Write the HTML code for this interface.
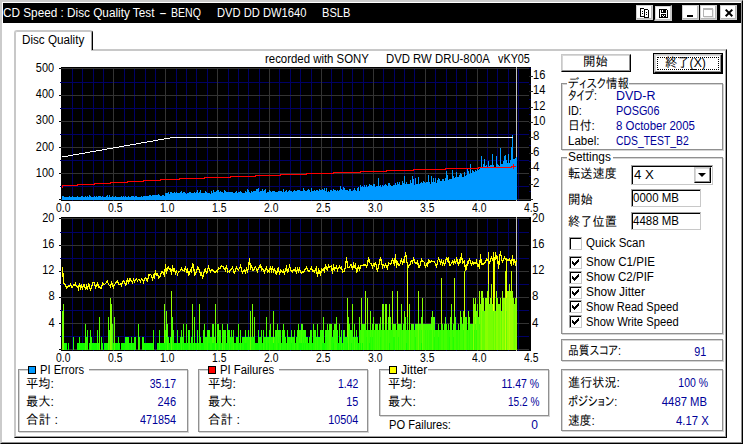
<!DOCTYPE html>
<html><head><meta charset="utf-8"><title>CD Speed : Disc Quality Test</title>
<style>
html,body{margin:0;padding:0}
body{width:743px;height:444px;position:relative;overflow:hidden;background:#fff;font:12px "Liberation Sans","IPAPGothic","IPAGothic",sans-serif;color:#000}
.a{position:absolute;box-sizing:border-box}
.t{position:absolute;white-space:pre;line-height:16px;height:16px}
.ch{position:absolute;left:0;top:0}
.g{position:absolute;box-sizing:border-box;border:1px solid #909090}
.gl{position:absolute;background:#fff;height:4px}
.btn{position:absolute;box-sizing:border-box;background:#fff;border:1px solid;border-color:#c8c8c8 #000 #000 #c8c8c8;box-shadow:inset -1px -1px 0 #909090,inset 1px 1px 0 #d8d8d8}
.ed{position:absolute;box-sizing:border-box;background:#fff;border:1px solid;border-color:#a0a0a0 #c8c8c8 #c8c8c8 #a0a0a0;box-shadow:inset 1px 1px 0 #000}
.cb{position:absolute;box-sizing:border-box;width:13px;height:13px;background:#fff;border:1px solid;border-color:#a0a0a0 #c8c8c8 #c8c8c8 #a0a0a0;box-shadow:inset 1px 1px 0 #000}
.sq{position:absolute;box-sizing:border-box;width:8px;height:8px;border:1px solid #000}
.tb{position:absolute;box-sizing:border-box;top:5px;width:17px;height:15px;background:#fff;border:1px solid #d0d0d0;box-shadow:inset -1px -1px 0 #b8b8b8}
</style></head>
<body>
<!-- window frame -->
<div class="a" style="left:0;top:0;width:743px;height:444px;border:1px solid;border-color:#cbcbcb #000 #000 #cbcbcb"></div>
<div class="a" style="left:1px;top:1px;width:741px;height:442px;border:1px solid;border-color:#cbcbcb #909090 #909090 #cbcbcb"></div>
<div class="a" style="left:3px;top:3px;width:738px;height:20px;background:#000"></div>
<!-- title buttons -->
<div class="tb" style="left:636px"><svg width="17" height="15" viewBox="0 0 17 15" style="position:absolute;left:-1px;top:-1px" shape-rendering="crispEdges"><path d="M4.5,3.5h3l1,1v7h-4z" fill="#fff" stroke="#000"/><path d="M8.5,4.5h3l1,1v7h-4z" fill="#fff" stroke="#000"/><path d="M6,6h1v1h-1zM6,8h1v1h-1zM10,7h1v1h-1zM10,9h1v1h-1z" fill="#000"/></svg></div>
<div class="a" style="left:654px;top:5px;width:18px;height:16px;background:#fff;border:2px solid;border-color:#000 #c8c8c8 #c8c8c8 #000;border-top-width:1px;border-left-width:1px;box-shadow:inset 1px 1px 0 #d8d8d8"><svg width="18" height="16" viewBox="0 0 18 16" style="position:absolute;left:-1px;top:-1px" shape-rendering="crispEdges"><path d="M5,4h8v1h1v8h-9z" fill="#000"/><path d="M6,5h1v7h-1zM12,5h1v7h-1zM7,8h5v1h-5zM8,5h1v2h-1zM8,10h1v1h-1zM9,11h1v1h-1zM10,10h1v1h-1z" fill="#fff"/></svg></div>
<div class="tb" style="left:682px"><div class="a" style="left:4px;top:9px;width:6px;height:2px;background:#000"></div></div>
<div class="tb" style="left:700px"><div class="a" style="left:2px;top:2px;width:10px;height:9px;border:1px solid #b4b4b4;border-top-width:2px;box-shadow:1px 1px 0 #e8e8e8"></div></div>
<div class="tb" style="left:720px"><svg width="17" height="15" viewBox="0 0 17 15" style="position:absolute;left:-1px;top:-1px"><path d="M5.7,4.6l6.6,6.6M12.3,4.6l-6.6,6.6" stroke="#000" stroke-width="2"/></svg></div>
<!-- tab panel -->
<div class="a" style="left:14px;top:49px;width:713px;height:389px;border:1px solid;border-color:#c8c8c8 #000 #000 #c8c8c8"></div>
<div class="a" style="left:15px;top:50px;width:711px;height:387px;border:1px solid;border-color:#c8c8c8 #a0a0a0 #a0a0a0 #c8c8c8"></div>
<div class="a" style="left:14px;top:30px;width:79px;height:20px;background:#fff;border:1px solid;border-color:#c8c8c8 #000 transparent #c8c8c8;border-bottom:0;border-radius:3px 3px 0 0"></div>
<div class="a" style="left:15px;top:31px;width:77px;height:19px;background:#fff;border:1px solid;border-color:#c8c8c8 #a0a0a0 #fff #c8c8c8;border-bottom:0;border-radius:2px 2px 0 0"></div>
<div class="a" style="left:16px;top:48px;width:75px;height:4px;background:#fff"></div>
<svg class="ch" width="743" height="444" viewBox="0 0 743 444" shape-rendering="crispEdges" fill="none">
<rect x="61" y="67" width="470" height="134" fill="#000"/>
<path d="M72.5,68 V201" stroke="#000066"/>
<path d="M82.5,68 V201" stroke="#000066"/>
<path d="M93.5,68 V201" stroke="#000066"/>
<path d="M103.5,68 V201" stroke="#000066"/>
<path d="M124.5,68 V201" stroke="#000066"/>
<path d="M134.5,68 V201" stroke="#000066"/>
<path d="M145.5,68 V201" stroke="#000066"/>
<path d="M155.5,68 V201" stroke="#000066"/>
<path d="M176.5,68 V201" stroke="#000066"/>
<path d="M186.5,68 V201" stroke="#000066"/>
<path d="M196.5,68 V201" stroke="#000066"/>
<path d="M207.5,68 V201" stroke="#000066"/>
<path d="M228.5,68 V201" stroke="#000066"/>
<path d="M238.5,68 V201" stroke="#000066"/>
<path d="M248.5,68 V201" stroke="#000066"/>
<path d="M259.5,68 V201" stroke="#000066"/>
<path d="M279.5,68 V201" stroke="#000066"/>
<path d="M290.5,68 V201" stroke="#000066"/>
<path d="M300.5,68 V201" stroke="#000066"/>
<path d="M311.5,68 V201" stroke="#000066"/>
<path d="M331.5,68 V201" stroke="#000066"/>
<path d="M342.5,68 V201" stroke="#000066"/>
<path d="M352.5,68 V201" stroke="#000066"/>
<path d="M363.5,68 V201" stroke="#000066"/>
<path d="M383.5,68 V201" stroke="#000066"/>
<path d="M394.5,68 V201" stroke="#000066"/>
<path d="M404.5,68 V201" stroke="#000066"/>
<path d="M414.5,68 V201" stroke="#000066"/>
<path d="M435.5,68 V201" stroke="#000066"/>
<path d="M446.5,68 V201" stroke="#000066"/>
<path d="M456.5,68 V201" stroke="#000066"/>
<path d="M466.5,68 V201" stroke="#000066"/>
<path d="M487.5,68 V201" stroke="#000066"/>
<path d="M497.5,68 V201" stroke="#000066"/>
<path d="M508.5,68 V201" stroke="#000066"/>
<path d="M518.5,68 V201" stroke="#000066"/>
<path d="M60,82.5 H529" stroke="#000066"/>
<path d="M60,108.5 H529" stroke="#000066"/>
<path d="M60,134.5 H529" stroke="#000066"/>
<path d="M60,160.5 H529" stroke="#000066"/>
<path d="M60,186.5 H529" stroke="#000066"/>
<path d="M113.5,68 V201" stroke="#333"/>
<path d="M165.5,68 V201" stroke="#333"/>
<path d="M217.5,68 V201" stroke="#333"/>
<path d="M269.5,68 V201" stroke="#333"/>
<path d="M321.5,68 V201" stroke="#333"/>
<path d="M373.5,68 V201" stroke="#333"/>
<path d="M425.5,68 V201" stroke="#333"/>
<path d="M477.5,68 V201" stroke="#333"/>
<path d="M61,68.5 H529" stroke="#333"/>
<path d="M61,95.5 H529" stroke="#333"/>
<path d="M61,121.5 H529" stroke="#333"/>
<path d="M61,147.5 H529" stroke="#333"/>
<path d="M61,173.5 H529" stroke="#333"/>
<path d="M61,199.5 H529" stroke="#333"/>
<path d="M516.5,67 V201" stroke="#c0c0c0"/>
<path d="M62,200V196 H63V196 H64V197 H65V197 H66V197 H67V197 H68V197 H69V196 H70V197 H71V197 H72V196 H73V197 H74V197 H75V197 H76V197 H77V196 H78V197 H79V197 H80V197 H81V196 H82V196 H83V197 H84V197 H85V196 H86V197 H87V196 H88V197 H89V195 H90V196 H91V197 H92V197 H93V197 H94V196 H95V197 H96V196 H97V197 H98V196 H99V196 H100V196 H101V197 H102V196 H103V197 H104V197 H105V197 H106V196 H107V195 H108V197 H109V195 H110V197 H111V197 H112V196 H113V197 H114V197 H115V196 H116V197 H117V197 H118V197 H119V197 H120V197 H121V196 H122V197 H123V196 H124V197 H125V196 H126V197 H127V197 H128V196 H129V197 H130V197 H131V196 H132V196 H133V196 H134V197 H135V196 H136V196 H137V197 H138V197 H139V197 H140V197 H141V196 H142V197 H143V196 H144V196 H145V196 H146V196 H147V196 H148V196 H149V195 H150V195 H151V196 H152V195 H153V195 H154V195 H155V195 H156V195 H157V195 H158V194 H159V195 H160V196 H161V196 H162V195 H163V195 H164V196 H165V193 H166V193 H167V193 H168V192 H169V194 H170V192 H171V192 H172V193 H173V193 H174V192 H175V193 H176V192 H177V193 H178V193 H179V193 H180V192 H181V191 H182V193 H183V192 H184V192 H185V193 H186V194 H187V193 H188V193 H189V192 H190V192 H191V193 H192V193 H193V193 H194V192 H195V193 H196V192 H197V190 H198V193 H199V192 H200V190 H201V193 H202V193 H203V193 H204V193 H205V191 H206V192 H207V193 H208V193 H209V193 H210V194 H211V191 H212V193 H213V190 H214V192 H215V192 H216V191 H217V190 H218V190 H219V192 H220V191 H221V192 H222V192 H223V193 H224V190 H225V191 H226V192 H227V192 H228V192 H229V192 H230V192 H231V192 H232V192 H233V193 H234V193 H235V192 H236V191 H237V193 H238V192 H239V192 H240V191 H241V192 H242V193 H243V193 H244V193 H245V191 H246V192 H247V189 H248V190 H249V192 H250V193 H251V191 H252V192 H253V191 H254V191 H255V191 H256V189 H257V189 H258V188 H259V192 H260V191 H261V191 H262V189 H263V191 H264V190 H265V189 H266V193 H267V192 H268V192 H269V190 H270V191 H271V192 H272V191 H273V191 H274V191 H275V192 H276V192 H277V192 H278V191 H279V191 H280V191 H281V191 H282V192 H283V189 H284V192 H285V191 H286V190 H287V192 H288V191 H289V190 H290V191 H291V191 H292V192 H293V191 H294V190 H295V191 H296V191 H297V190 H298V190 H299V190 H300V191 H301V191 H302V191 H303V188 H304V190 H305V191 H306V191 H307V190 H308V189 H309V190 H310V192 H311V188 H312V191 H313V191 H314V190 H315V191 H316V190 H317V190 H318V191 H319V189 H320V190 H321V190 H322V189 H323V190 H324V188 H325V191 H326V188 H327V192 H328V191 H329V192 H330V190 H331V190 H332V191 H333V189 H334V190 H335V190 H336V191 H337V190 H338V191 H339V190 H340V186 H341V189 H342V190 H343V187 H344V188 H345V190 H346V190 H347V190 H348V191 H349V189 H350V189 H351V191 H352V191 H353V190 H354V188 H355V190 H356V191 H357V188 H358V187 H359V191 H360V185 H361V187 H362V186 H363V187 H364V185 H365V187 H366V185 H367V187 H368V186 H369V184 H370V185 H371V185 H372V186 H373V184 H374V184 H375V187 H376V186 H377V186 H378V178 H379V186 H380V185 H381V187 H382V185 H383V186 H384V185 H385V184 H386V185 H387V186 H388V183 H389V183 H390V185 H391V186 H392V186 H393V185 H394V185 H395V183 H396V185 H397V182 H398V184 H399V182 H400V185 H401V185 H402V181 H403V183 H404V176 H405V184 H406V182 H407V184 H408V184 H409V184 H410V180 H411V183 H412V176 H413V179 H414V185 H415V178 H416V184 H417V184 H418V177 H419V184 H420V183 H421V182 H422V183 H423V181 H424V182 H425V183 H426V182 H427V182 H428V175 H429V182 H430V184 H431V176 H432V182 H433V178 H434V182 H435V178 H436V183 H437V180 H438V178 H439V179 H440V181 H441V181 H442V179 H443V179 H444V181 H445V178 H446V171 H447V175 H448V180 H449V179 H450V179 H451V179 H452V170 H453V176 H454V178 H455V177 H456V172 H457V177 H458V177 H459V175 H460V173 H461V174 H462V177 H463V177 H464V172 H465V176 H466V175 H467V169 H468V171 H469V174 H470V164 H471V173 H472V170 H473V171 H474V172 H475V170 H476V171 H477V169 H478V170 H479V169 H480V168 H481V156 H482V167 H483V164 H484V159 H485V166 H486V165 H487V167 H488V161 H489V166 H490V165 H491V165 H492V154 H493V165 H494V167 H495V167 H496V156 H497V164 H498V165 H499V166 H500V148 H501V164 H502V164 H503V161 H504V156 H505V155 H506V160 H507V163 H508V154 H509V163 H510V160 H511V147 H512V135 H513V159 H514V159 H515V158 H516V157 H517V200Z" fill="#0099ff"/>
<path d="M62,157 L172.5,137.5 H513" stroke="#fff"/>
<path d="M62.5,188 V185.5 H77.5 V184.5 H94.5 V183.5 H110.5 V182.5 H127.5 V181.5 H143.5 V180.5 H160.5 V179.5 H179.5 V178.5 H204.5 V177.5 H230.5 V176.5 H255.5 V175.5 H280.5 V174.5 H306.5 V173.5 H333.5 V172.5 H360.5 V171.5 H386.5 V170.5 H413.5 V169.5 H445.5 V168.5 H478.5 V167.5 H511.5 V166.5 H515" stroke="#f00"/>
<path d="M511,166.5 H516 M513.5,164 V169" stroke="#f00"/>
<path d="M59,68.5 H61" stroke="#000"/>
<path d="M59,95.5 H61" stroke="#000"/>
<path d="M59,121.5 H61" stroke="#000"/>
<path d="M59,147.5 H61" stroke="#000"/>
<path d="M59,173.5 H61" stroke="#000"/>
<path d="M59,199.5 H61" stroke="#000"/>
<path d="M529,199.5 H533" stroke="#2a2a2a"/>
<path d="M529,184.5 H533" stroke="#2a2a2a"/>
<path d="M529,168.5 H533" stroke="#2a2a2a"/>
<path d="M529,153.5 H533" stroke="#2a2a2a"/>
<path d="M529,137.5 H533" stroke="#2a2a2a"/>
<path d="M529,122.5 H533" stroke="#2a2a2a"/>
<path d="M529,107.5 H533" stroke="#2a2a2a"/>
<path d="M529,91.5 H533" stroke="#2a2a2a"/>
<path d="M529,76.5 H533" stroke="#2a2a2a"/>
<path d="M529,191.5 H531" stroke="#000066"/>
<path d="M529,176.5 H531" stroke="#000066"/>
<path d="M529,161.5 H531" stroke="#000066"/>
<path d="M529,145.5 H531" stroke="#000066"/>
<path d="M529,130.5 H531" stroke="#000066"/>
<path d="M529,114.5 H531" stroke="#000066"/>
<path d="M529,99.5 H531" stroke="#000066"/>
<path d="M529,84.5 H531" stroke="#000066"/>
<path d="M529,68.5 H531" stroke="#000066"/>
<rect x="61" y="217" width="470" height="134" fill="#000"/>
<path d="M72.5,218 V351" stroke="#000066"/>
<path d="M82.5,218 V351" stroke="#000066"/>
<path d="M93.5,218 V351" stroke="#000066"/>
<path d="M103.5,218 V351" stroke="#000066"/>
<path d="M124.5,218 V351" stroke="#000066"/>
<path d="M134.5,218 V351" stroke="#000066"/>
<path d="M145.5,218 V351" stroke="#000066"/>
<path d="M155.5,218 V351" stroke="#000066"/>
<path d="M176.5,218 V351" stroke="#000066"/>
<path d="M186.5,218 V351" stroke="#000066"/>
<path d="M196.5,218 V351" stroke="#000066"/>
<path d="M207.5,218 V351" stroke="#000066"/>
<path d="M228.5,218 V351" stroke="#000066"/>
<path d="M238.5,218 V351" stroke="#000066"/>
<path d="M248.5,218 V351" stroke="#000066"/>
<path d="M259.5,218 V351" stroke="#000066"/>
<path d="M279.5,218 V351" stroke="#000066"/>
<path d="M290.5,218 V351" stroke="#000066"/>
<path d="M300.5,218 V351" stroke="#000066"/>
<path d="M311.5,218 V351" stroke="#000066"/>
<path d="M331.5,218 V351" stroke="#000066"/>
<path d="M342.5,218 V351" stroke="#000066"/>
<path d="M352.5,218 V351" stroke="#000066"/>
<path d="M363.5,218 V351" stroke="#000066"/>
<path d="M383.5,218 V351" stroke="#000066"/>
<path d="M394.5,218 V351" stroke="#000066"/>
<path d="M404.5,218 V351" stroke="#000066"/>
<path d="M414.5,218 V351" stroke="#000066"/>
<path d="M435.5,218 V351" stroke="#000066"/>
<path d="M446.5,218 V351" stroke="#000066"/>
<path d="M456.5,218 V351" stroke="#000066"/>
<path d="M466.5,218 V351" stroke="#000066"/>
<path d="M487.5,218 V351" stroke="#000066"/>
<path d="M497.5,218 V351" stroke="#000066"/>
<path d="M508.5,218 V351" stroke="#000066"/>
<path d="M518.5,218 V351" stroke="#000066"/>
<path d="M60,232.5 H529" stroke="#000066"/>
<path d="M60,258.5 H529" stroke="#000066"/>
<path d="M60,284.5 H529" stroke="#000066"/>
<path d="M60,310.5 H529" stroke="#000066"/>
<path d="M60,336.5 H529" stroke="#000066"/>
<path d="M113.5,218 V351" stroke="#333"/>
<path d="M165.5,218 V351" stroke="#333"/>
<path d="M217.5,218 V351" stroke="#333"/>
<path d="M269.5,218 V351" stroke="#333"/>
<path d="M321.5,218 V351" stroke="#333"/>
<path d="M373.5,218 V351" stroke="#333"/>
<path d="M425.5,218 V351" stroke="#333"/>
<path d="M477.5,218 V351" stroke="#333"/>
<path d="M61,218.5 H529" stroke="#333"/>
<path d="M61,245.5 H529" stroke="#333"/>
<path d="M61,271.5 H529" stroke="#333"/>
<path d="M61,297.5 H529" stroke="#333"/>
<path d="M61,323.5 H529" stroke="#333"/>
<path d="M61,349.5 H529" stroke="#333"/>
<path d="M516.5,217 V351" stroke="#c0c0c0"/>
<path d="M64,350V343H67V350ZM68,350V343H69V350ZM77,350V343H79V350ZM80,350V343H85V350ZM89,350V343H90V350ZM92,350V343H97V350ZM98,350V343H99V350ZM102,350V343H103V350ZM104,350V343H108V350ZM113,350V343H114V350ZM115,350V343H118V350ZM119,350V343H120V350ZM121,350V343H125V350ZM129,350V343H131V350ZM132,350V343H134V350ZM144,350V343H153V350ZM157,350V343H159V350ZM160,350V343H165V350ZM166,350V343H167V350ZM169,350V343H171V350ZM174,350V343H177V350ZM178,350V343H181V350ZM182,350V343H183V350ZM184,350V343H188V350ZM190,350V343H192V350ZM193,350V343H194V350ZM195,350V343H197V350ZM198,350V343H199V350ZM201,350V343H204V350ZM208,350V343H210V350ZM212,350V343H215V350ZM216,350V343H218V350ZM220,350V343H222V350ZM225,350V343H227V350ZM228,350V343H229V350ZM230,350V343H231V350ZM234,350V343H236V350ZM238,350V343H240V350ZM241,350V343H242V350ZM244,350V343H247V350ZM255,350V343H259V350ZM262,350V343H263V350ZM265,350V343H266V350ZM268,350V343H269V350ZM273,350V343H274V350ZM278,350V343H279V350ZM281,350V343H282V350ZM286,350V343H287V350ZM291,350V343H292V350ZM295,350V343H296V350ZM299,350V343H302V350ZM303,350V343H304V350ZM305,350V343H306V350ZM308,350V343H309V350ZM312,350V343H313V350ZM322,350V343H325V350ZM333,350V343H334V350ZM337,350V343H339V350ZM340,350V343H341V350ZM342,350V343H343V350ZM347,350V343H348V350ZM351,350V343H352V350ZM358,350V343H359V350ZM360,350V343H361V350ZM362,350V343H363V350ZM369,350V343H370V350ZM389,350V343H390V350ZM406,350V343H407V350ZM421,350V343H422V350Z" fill="#11ff00"/>
<path d="M73,350V337H74V350ZM79,350V337H80V350ZM86,350V337H87V350ZM91,350V337H92V350ZM101,350V337H102V350ZM118,350V337H119V350ZM125,350V337H129V350ZM131,350V337H132V350ZM134,350V337H136V350ZM139,350V337H140V350ZM142,350V337H144V350ZM165,350V337H166V350ZM168,350V337H169V350ZM172,350V337H174V350ZM177,350V337H178V350ZM183,350V337H184V350ZM188,350V337H189V350ZM192,350V337H193V350ZM194,350V337H195V350ZM199,350V337H201V350ZM204,350V337H207V350ZM210,350V337H212V350ZM218,350V337H219V350ZM223,350V337H224V350ZM227,350V337H228V350ZM231,350V337H233V350ZM236,350V337H238V350ZM242,350V337H244V350ZM247,350V337H250V350ZM251,350V337H255V350ZM259,350V337H262V350ZM264,350V337H265V350ZM267,350V337H268V350ZM270,350V337H273V350ZM274,350V337H276V350ZM277,350V337H278V350ZM279,350V337H280V350ZM282,350V337H286V350ZM288,350V337H291V350ZM292,350V337H294V350ZM296,350V337H297V350ZM298,350V337H299V350ZM302,350V337H303V350ZM304,350V337H305V350ZM306,350V337H308V350ZM309,350V337H312V350ZM313,350V337H315V350ZM316,350V337H317V350ZM318,350V337H320V350ZM325,350V337H327V350ZM331,350V337H333V350ZM339,350V337H340V350ZM344,350V337H347V350ZM349,350V337H350V350ZM353,350V337H354V350ZM355,350V337H356V350ZM357,350V337H358V350ZM366,350V337H367V350ZM370,350V337H371V350ZM372,350V337H373V350ZM380,350V337H381V350ZM393,350V337H395V350ZM398,350V337H399V350ZM415,350V337H416V350ZM434,350V337H435V350ZM438,350V337H439V350ZM449,350V337H450V350ZM453,350V337H454V350ZM166,343V337H167V343ZM170,343V337H171V343ZM180,343V337H181V343ZM182,343V337H183V343ZM186,343V337H187V343ZM191,343V337H192V343ZM208,343V337H210V343ZM214,343V337H215V343ZM230,343V337H231V343ZM238,343V337H239V343ZM244,343V337H245V343ZM246,343V337H247V343ZM265,343V337H266V343ZM268,343V337H269V343ZM333,343V337H334V343ZM337,343V337H338V343ZM340,343V337H341V343ZM347,343V337H348V343Z" fill="#22ff00"/>
<path d="M87,350V330H88V350ZM90,350V330H91V350ZM97,350V330H98V350ZM109,350V330H110V350ZM153,350V330H154V350ZM159,350V330H160V350ZM181,350V330H182V350ZM189,350V330H190V350ZM197,350V330H198V350ZM207,350V330H208V350ZM219,350V330H220V350ZM224,350V330H225V350ZM229,350V330H230V350ZM233,350V330H234V350ZM240,350V330H241V350ZM263,350V330H264V350ZM266,350V330H267V350ZM269,350V330H270V350ZM276,350V330H277V350ZM280,350V330H281V350ZM287,350V330H288V350ZM294,350V330H295V350ZM297,350V330H298V350ZM315,350V330H316V350ZM317,350V330H318V350ZM320,350V330H322V350ZM327,350V330H329V350ZM334,350V330H337V350ZM341,350V330H342V350ZM343,350V330H344V350ZM350,350V330H351V350ZM352,350V330H353V350ZM356,350V330H357V350ZM359,350V330H360V350ZM364,350V330H366V350ZM368,350V330H369V350ZM371,350V330H372V350ZM373,350V330H375V350ZM376,350V330H377V350ZM378,350V330H379V350ZM381,350V330H382V350ZM384,350V330H386V350ZM387,350V330H388V350ZM390,350V330H393V350ZM396,350V330H397V350ZM400,350V330H401V350ZM402,350V330H403V350ZM407,350V330H409V350ZM410,350V330H411V350ZM414,350V330H415V350ZM419,350V330H420V350ZM425,350V330H426V350ZM427,350V330H428V350ZM429,350V330H432V350ZM433,350V330H434V350ZM435,350V330H438V350ZM439,350V330H441V350ZM443,350V330H444V350ZM447,350V330H449V350ZM452,350V330H453V350ZM456,350V330H458V350ZM459,350V330H460V350ZM463,350V330H464V350ZM467,350V330H468V350ZM469,350V330H470V350ZM472,350V330H473V350ZM474,350V330H475V350ZM476,350V330H477V350ZM203,343V330H204V343ZM220,343V330H221V343ZM225,343V330H226V343ZM228,343V330H229V343ZM245,343V330H246V343ZM258,343V330H259V343ZM278,343V330H279V343ZM291,343V330H292V343ZM299,343V330H301V343ZM303,343V330H304V343ZM305,343V330H306V343ZM322,343V330H324V343ZM351,343V330H352V343ZM360,343V330H361V343ZM369,343V330H370V343ZM389,343V330H390V343ZM406,343V330H407V343ZM421,343V330H422V343ZM165,337V330H166V337ZM173,337V330H174V337ZM177,337V330H178V337ZM188,337V330H189V337ZM192,337V330H193V337ZM208,337V330H210V337ZM223,337V330H224V337ZM227,337V330H228V337ZM231,337V330H232V337ZM248,337V330H249V337ZM261,337V330H262V337ZM275,337V330H276V337ZM277,337V330H278V337ZM279,337V330H280V337ZM282,337V330H283V337ZM284,337V330H285V337ZM302,337V330H303V337ZM304,337V330H305V337ZM310,337V330H312V337ZM314,337V330H315V337ZM325,337V330H327V337ZM333,337V330H334V337ZM337,337V330H338V337ZM339,337V330H340V337ZM344,337V330H345V337ZM349,337V330H350V337ZM366,337V330H367V337ZM380,337V330H381V337ZM449,337V330H450V337Z" fill="#33ff00"/>
<path d="M85,350V324H86V350ZM112,350V324H113V350ZM138,350V324H139V350ZM167,350V324H168V350ZM215,350V324H216V350ZM222,350V324H223V350ZM329,350V324H331V350ZM354,350V324H355V350ZM361,350V324H362V350ZM363,350V324H364V350ZM367,350V324H368V350ZM375,350V324H376V350ZM377,350V324H378V350ZM379,350V324H380V350ZM382,350V324H384V350ZM386,350V324H387V350ZM388,350V324H389V350ZM395,350V324H396V350ZM397,350V324H398V350ZM399,350V324H400V350ZM401,350V324H402V350ZM403,350V324H406V350ZM411,350V324H414V350ZM416,350V324H418V350ZM420,350V324H421V350ZM423,350V324H425V350ZM426,350V324H427V350ZM428,350V324H429V350ZM441,350V324H443V350ZM444,350V324H447V350ZM450,350V324H452V350ZM454,350V324H456V350ZM458,350V324H459V350ZM460,350V324H463V350ZM466,350V324H467V350ZM468,350V324H469V350ZM470,350V324H472V350ZM475,350V324H476V350ZM479,350V324H480V350ZM212,343V324H214V343ZM217,343V324H218V343ZM301,343V324H302V343ZM362,343V324H363V343ZM183,337V324H184V337ZM186,337V324H187V337ZM199,337V324H200V337ZM204,337V324H205V337ZM218,337V324H219V337ZM238,337V324H239V337ZM270,337V324H271V337ZM283,337V324H284V337ZM298,337V324H299V337ZM313,337V324H314V337ZM331,337V324H332V337ZM370,337V324H371V337ZM372,337V324H373V337ZM393,337V324H395V337ZM398,337V324H399V337ZM415,337V324H416V337ZM434,337V324H435V337ZM438,337V324H439V337ZM453,337V324H454V337ZM227,330V324H228V330ZM277,330V324H278V330ZM302,330V324H303V330ZM317,330V324H318V330ZM327,330V324H328V330ZM334,330V324H336V330ZM339,330V324H340V330ZM349,330V324H350V330ZM352,330V324H353V330ZM359,330V324H360V330ZM364,330V324H366V330ZM376,330V324H377V330ZM390,330V324H391V330ZM392,330V324H393V330ZM400,330V324H401V330ZM419,330V324H420V330ZM425,330V324H426V330ZM427,330V324H428V330ZM429,330V324H431V330ZM433,330V324H434V330ZM448,330V324H449V330ZM469,330V324H470V330ZM472,330V324H473V330Z" fill="#44ff00"/>
<path d="M99,350V317H100V350ZM108,350V317H109V350ZM114,350V317H115V350ZM171,350V317H172V350ZM348,350V317H349V350ZM432,350V317H433V350ZM464,350V317H466V350ZM477,350V317H479V350ZM172,337V317H173V337ZM194,337V317H195V337ZM254,337V317H255V337ZM266,330V317H267V330ZM323,330V317H324V330ZM336,330V317H337V330ZM373,330V317H374V330ZM380,330V317H381V330ZM407,330V317H408V330ZM421,330V317H422V330ZM431,330V317H432V330ZM474,330V317H475V330ZM359,324V317H360V324ZM388,324V317H389V324ZM390,324V317H391V324ZM405,324V317H406V324ZM433,324V317H435V324ZM445,324V317H446V324ZM450,324V317H451V324ZM455,324V317H456V324ZM461,324V317H462V324ZM466,324V317H467V324ZM469,324V317H470V324Z" fill="#55ff00"/>
<path d="M62,350V311H63V350ZM250,350V311H251V350ZM409,350V311H410V350ZM418,350V311H419V350ZM422,350V311H423V350ZM480,350V311H481V350ZM482,350V311H485V350ZM493,350V311H494V350ZM495,350V311H496V350ZM501,350V311H502V350ZM506,350V311H507V350ZM273,343V311H274V343ZM166,337V311H167V337ZM463,330V311H464V330ZM476,330V311H477V330ZM370,324V311H371V324ZM383,324V311H384V324ZM404,324V311H405V324ZM454,324V311H455V324ZM460,324V311H461V324ZM468,324V311H469V324ZM432,317V311H433V317Z" fill="#66ff00"/>
<path d="M63,350V304H64V350ZM111,350V304H112V350ZM488,350V304H493V350ZM498,350V304H500V350ZM504,350V304H505V350ZM514,350V304H515V350ZM164,343V304H165V343ZM252,337V304H253V337ZM192,330V304H193V330ZM385,330V304H386V330ZM389,330V304H390V330ZM199,324V304H200V324ZM215,324V304H216V324ZM352,324V304H353V324ZM382,324V304H383V324ZM386,324V304H387V324ZM401,324V304H402V324ZM451,324V304H452V324ZM479,324V304H480V324ZM474,317V304H475V317ZM477,317V304H478V317ZM383,311V304H384V311ZM409,311V304H410V311ZM480,311V304H481V311Z" fill="#77ff00"/>
<path d="M110,350V298H111V350ZM473,350V298H474V350ZM481,350V298H482V350ZM485,350V298H488V350ZM494,350V298H495V350ZM496,350V298H498V350ZM500,350V298H501V350ZM503,350V298H504V350ZM513,350V298H514V350ZM515,350V298H517V350ZM347,337V298H348V337ZM361,324V298H362V324ZM367,324V298H368V324ZM475,324V298H476V324ZM422,311V298H423V311ZM483,311V298H484V311ZM506,311V298H507V311ZM490,304V298H491V304ZM504,304V298H505V304Z" fill="#88ff00"/>
<path d="M502,350V291H503V350ZM507,350V291H509V350ZM510,350V291H513V350ZM365,324V291H366V324ZM392,324V291H393V324ZM397,324V291H398V324ZM171,317V291H172V317ZM418,311V291H419V311ZM482,311V291H483V311ZM479,304V291H480V304ZM481,298V291H482V298ZM487,298V291H488V298ZM496,298V291H497V298Z" fill="#99ff00"/>
<path d="M509,350V284H510V350ZM488,304V284H489V304ZM491,304V284H492V304Z" fill="#aaff00"/>
<path d="M505,350V278H506V350ZM441,324V278H442V324ZM454,311V278H455V311Z" fill="#bbff00"/>
<path d="M464,317V271H465V317ZM511,291V271H512V291ZM505,278V271H506V278Z" fill="#ccff00"/>
<path d="M407,317V265H408V317ZM494,298V265H495V298Z" fill="#ddff00"/>
<path d="M506,298V258H507V298Z" fill="#eeff00"/>
<path d="M493,311V252H494V311ZM488,284V252H489V284Z" fill="#ffff00"/>
<path d="M62.5,267.0 L63.5,282.7 L64.5,283.7 L65.5,285.5 L66.5,287.9 L67.5,287.1 L68.5,285.9 L69.5,286.1 L70.5,284.5 L71.5,287.1 L72.5,287.0 L73.5,284.8 L74.5,285.5 L75.5,283.6 L76.5,286.8 L77.5,286.4 L78.5,288.9 L79.5,282.6 L80.5,289.5 L81.5,285.7 L82.5,288.3 L83.5,285.3 L84.5,284.4 L85.5,290.0 L86.5,286.6 L87.5,290.3 L88.5,282.7 L89.5,287.1 L90.5,289.8 L91.5,287.7 L92.5,282.9 L93.5,282.5 L94.5,283.0 L95.5,287.9 L96.5,286.4 L97.5,282.1 L98.5,287.7 L99.5,286.8 L100.5,288.2 L101.5,288.6 L102.5,282.8 L103.5,284.0 L104.5,284.2 L105.5,283.8 L106.5,282.5 L107.5,281.2 L108.5,284.7 L109.5,285.3 L110.5,286.8 L111.5,281.6 L112.5,285.2 L113.5,287.4 L114.5,284.3 L115.5,283.5 L116.5,281.4 L117.5,280.8 L118.5,284.8 L119.5,284.8 L120.5,283.5 L121.5,285.4 L122.5,282.5 L123.5,281.0 L124.5,281.7 L125.5,285.5 L126.5,284.3 L127.5,278.1 L128.5,283.4 L129.5,279.0 L130.5,279.1 L131.5,281.2 L132.5,282.6 L133.5,279.5 L134.5,281.9 L135.5,280.0 L136.5,279.1 L137.5,280.8 L138.5,279.5 L139.5,279.4 L140.5,281.5 L141.5,278.7 L142.5,279.6 L143.5,282.3 L144.5,278.5 L145.5,278.1 L146.5,278.7 L147.5,282.0 L148.5,274.9 L149.5,274.9 L150.5,274.8 L151.5,275.4 L152.5,278.9 L153.5,275.4 L154.5,277.7 L155.5,270.0 L156.5,276.3 L157.5,273.2 L158.5,278.4 L159.5,277.2 L160.5,275.5 L161.5,272.0 L162.5,272.0 L163.5,272.2 L164.5,276.9 L165.5,264.4 L166.5,273.8 L167.5,267.6 L168.5,267.0 L169.5,269.5 L170.5,269.1 L171.5,274.5 L172.5,265.2 L173.5,270.9 L174.5,269.0 L175.5,273.5 L176.5,271.6 L177.5,274.3 L178.5,272.0 L179.5,271.3 L180.5,270.8 L181.5,268.0 L182.5,270.2 L183.5,270.7 L184.5,271.2 L185.5,266.4 L186.5,272.7 L187.5,268.4 L188.5,276.0 L189.5,273.4 L190.5,270.2 L191.5,271.6 L192.5,263.9 L193.5,264.9 L194.5,274.9 L195.5,273.8 L196.5,271.5 L197.5,266.9 L198.5,268.4 L199.5,270.3 L200.5,274.6 L201.5,273.2 L202.5,277.6 L203.5,274.8 L204.5,270.0 L205.5,269.1 L206.5,274.2 L207.5,270.7 L208.5,267.0 L209.5,270.6 L210.5,271.7 L211.5,269.5 L212.5,269.7 L213.5,270.7 L214.5,272.2 L215.5,271.9 L216.5,270.7 L217.5,272.2 L218.5,267.5 L219.5,268.5 L220.5,268.0 L221.5,265.6 L222.5,266.7 L223.5,267.0 L224.5,269.5 L225.5,270.8 L226.5,264.7 L227.5,271.9 L228.5,271.7 L229.5,272.2 L230.5,269.5 L231.5,269.0 L232.5,267.4 L233.5,270.4 L234.5,274.1 L235.5,269.0 L236.5,267.3 L237.5,269.6 L238.5,269.9 L239.5,268.1 L240.5,265.9 L241.5,269.6 L242.5,272.8 L243.5,270.7 L244.5,269.6 L245.5,273.6 L246.5,267.2 L247.5,270.9 L248.5,267.7 L249.5,257.8 L250.5,269.7 L251.5,265.0 L252.5,270.4 L253.5,270.7 L254.5,268.3 L255.5,267.0 L256.5,269.1 L257.5,271.5 L258.5,267.4 L259.5,267.7 L260.5,264.0 L261.5,269.7 L262.5,268.7 L263.5,270.6 L264.5,272.9 L265.5,269.1 L266.5,267.2 L267.5,271.8 L268.5,271.0 L269.5,272.3 L270.5,266.1 L271.5,271.0 L272.5,268.0 L273.5,271.6 L274.5,269.3 L275.5,271.0 L276.5,275.3 L277.5,269.3 L278.5,268.2 L279.5,274.7 L280.5,270.0 L281.5,270.7 L282.5,272.3 L283.5,270.3 L284.5,274.5 L285.5,269.1 L286.5,266.8 L287.5,272.9 L288.5,269.9 L289.5,266.2 L290.5,269.5 L291.5,271.1 L292.5,272.1 L293.5,269.4 L294.5,270.2 L295.5,268.3 L296.5,273.7 L297.5,267.2 L298.5,271.0 L299.5,268.4 L300.5,271.8 L301.5,273.2 L302.5,271.4 L303.5,272.4 L304.5,271.0 L305.5,268.5 L306.5,267.4 L307.5,269.6 L308.5,271.5 L309.5,271.3 L310.5,268.7 L311.5,267.3 L312.5,271.0 L313.5,270.6 L314.5,272.1 L315.5,269.6 L316.5,267.6 L317.5,277.4 L318.5,269.2 L319.5,271.2 L320.5,275.7 L321.5,268.9 L322.5,269.8 L323.5,268.6 L324.5,273.0 L325.5,263.8 L326.5,269.0 L327.5,270.1 L328.5,265.2 L329.5,267.4 L330.5,266.8 L331.5,265.9 L332.5,274.3 L333.5,264.4 L334.5,269.6 L335.5,267.9 L336.5,266.1 L337.5,270.4 L338.5,267.6 L339.5,266.3 L340.5,268.4 L341.5,266.9 L342.5,272.4 L343.5,271.2 L344.5,271.0 L345.5,266.8 L346.5,257.5 L347.5,266.8 L348.5,267.8 L349.5,267.5 L350.5,264.6 L351.5,265.2 L352.5,270.2 L353.5,264.1 L354.5,266.9 L355.5,264.5 L356.5,272.1 L357.5,270.8 L358.5,264.7 L359.5,271.3 L360.5,265.1 L361.5,265.1 L362.5,265.6 L363.5,264.9 L364.5,265.0 L365.5,264.4 L366.5,266.7 L367.5,265.6 L368.5,257.2 L369.5,262.2 L370.5,263.6 L371.5,264.1 L372.5,267.2 L373.5,264.4 L374.5,265.7 L375.5,262.2 L376.5,267.4 L377.5,271.5 L378.5,266.3 L379.5,262.6 L380.5,257.5 L381.5,261.5 L382.5,267.2 L383.5,264.9 L384.5,267.0 L385.5,264.7 L386.5,266.7 L387.5,268.8 L388.5,262.7 L389.5,263.3 L390.5,264.3 L391.5,262.7 L392.5,257.7 L393.5,263.2 L394.5,264.6 L395.5,253.9 L396.5,268.1 L397.5,261.1 L398.5,265.5 L399.5,265.5 L400.5,262.7 L401.5,258.0 L402.5,265.0 L403.5,259.9 L404.5,261.5 L405.5,251.9 L406.5,259.6 L407.5,264.7 L408.5,266.5 L409.5,264.4 L410.5,264.0 L411.5,260.0 L412.5,263.8 L413.5,257.1 L414.5,260.8 L415.5,263.5 L416.5,263.7 L417.5,260.4 L418.5,267.2 L419.5,267.8 L420.5,264.0 L421.5,259.5 L422.5,261.0 L423.5,261.5 L424.5,262.3 L425.5,268.3 L426.5,262.8 L427.5,267.3 L428.5,259.5 L429.5,262.1 L430.5,262.5 L431.5,261.1 L432.5,261.4 L433.5,261.7 L434.5,261.5 L435.5,264.4 L436.5,266.8 L437.5,261.7 L438.5,258.5 L439.5,259.9 L440.5,263.7 L441.5,261.1 L442.5,264.3 L443.5,261.8 L444.5,264.8 L445.5,262.5 L446.5,256.7 L447.5,260.5 L448.5,258.2 L449.5,265.2 L450.5,264.9 L451.5,262.9 L452.5,261.0 L453.5,263.4 L454.5,259.6 L455.5,264.4 L456.5,258.4 L457.5,259.6 L458.5,266.1 L459.5,260.8 L460.5,263.3 L461.5,253.2 L462.5,264.2 L463.5,261.5 L464.5,260.8 L465.5,271.1 L466.5,268.3 L467.5,262.0 L468.5,262.8 L469.5,259.1 L470.5,261.5 L471.5,266.1 L472.5,261.0 L473.5,264.3 L474.5,262.6 L475.5,263.4 L476.5,260.6 L477.5,266.1 L478.5,265.0 L479.5,268.5 L480.5,254.5 L481.5,264.4 L482.5,263.9 L483.5,264.7 L484.5,263.0 L485.5,262.3 L486.5,258.8 L487.5,260.1 L488.5,259.6 L489.5,262.4 L490.5,260.7 L491.5,256.4 L492.5,260.3 L493.5,259.2 L494.5,266.6 L495.5,251.9 L496.5,259.1 L497.5,255.7 L498.5,268.7 L499.5,259.7 L500.5,251.2 L501.5,259.3 L502.5,261.6 L503.5,258.8 L504.5,257.1 L505.5,259.2 L506.5,260.2 L507.5,259.9 L508.5,260.4 L509.5,259.0 L510.5,261.5 L511.5,265.7 L512.5,254.8 L513.5,264.9 L514.5,259.6 L515.5,263.5 L516.5,260.1" stroke="#ff0" stroke-width="1.2" shape-rendering="crispEdges"/>
<path d="M59,218.5 H61" stroke="#000"/>
<path d="M59,245.5 H61" stroke="#000"/>
<path d="M59,271.5 H61" stroke="#000"/>
<path d="M59,297.5 H61" stroke="#000"/>
<path d="M59,323.5 H61" stroke="#000"/>
<path d="M59,349.5 H61" stroke="#000"/>
</svg>
<!-- buttons -->
<div class="btn" style="left:561px;top:54px;width:70px;height:18px"></div>
<div class="a" style="left:653px;top:53px;width:70px;height:21px;border:1px solid #000"></div>
<div class="btn" style="left:654px;top:54px;width:68px;height:19px"></div>
<div class="a" style="left:657px;top:57px;width:62px;height:13px;border:1px dotted #000"></div>
<div class="a" style="left:690px;top:69px;width:6px;height:1px;background:#000"></div>
<!-- groups -->
<div class="g" style="left:562px;top:84px;width:162px;height:67px;border-color:#d4d4d4"></div><div class="g" style="left:561px;top:83px;width:162px;height:67px"></div><div class="gl" style="left:567px;top:82px;width:62px"></div>
<div class="g" style="left:562px;top:158px;width:162px;height:177px;border-color:#d4d4d4"></div><div class="g" style="left:561px;top:157px;width:162px;height:177px"></div><div class="gl" style="left:567px;top:156px;width:46px"></div>
<div class="g" style="left:562px;top:340px;width:162px;height:22px;border-color:#d4d4d4"></div><div class="g" style="left:561px;top:339px;width:162px;height:22px"></div>
<div class="g" style="left:562px;top:370px;width:162px;height:62px;border-color:#d4d4d4"></div><div class="g" style="left:561px;top:369px;width:162px;height:62px"></div>
<div class="g" style="left:19px;top:370px;width:170px;height:63px;border-color:#d4d4d4"></div><div class="g" style="left:18px;top:369px;width:170px;height:63px"></div><div class="gl" style="left:28px;top:368px;width:61px"></div>
<div class="g" style="left:199px;top:370px;width:170px;height:63px;border-color:#d4d4d4"></div><div class="g" style="left:198px;top:369px;width:170px;height:63px"></div><div class="gl" style="left:208px;top:368px;width:71px"></div>
<div class="g" style="left:380px;top:370px;width:170px;height:47px;border-color:#d4d4d4"></div><div class="g" style="left:379px;top:369px;width:170px;height:47px"></div><div class="gl" style="left:389px;top:368px;width:39px"></div>
<div class="sq" style="left:28px;top:366px;background:#0099ff"></div>
<div class="sq" style="left:208px;top:366px;background:#f00"></div>
<div class="sq" style="left:389px;top:366px;background:#ff0"></div>
<!-- settings controls -->
<div class="ed" style="left:631px;top:165px;width:82px;height:20px"></div>
<div class="btn" style="left:694px;top:167px;width:17px;height:16px"></div>
<div class="a" style="left:698px;top:173px;width:0;height:0;border:4px solid transparent;border-top:4px solid #000;border-bottom:0"></div>
<div class="ed" style="left:631px;top:189px;width:70px;height:18px"></div>
<div class="ed" style="left:631px;top:212px;width:70px;height:18px"></div>
<div class="cb" style="left:569px;top:237px"></div><div class="cb" style="left:569px;top:256px"></div><div class="cb" style="left:569px;top:271px"></div><div class="cb" style="left:569px;top:286px"></div><div class="cb" style="left:569px;top:300px"></div><div class="cb" style="left:569px;top:315px"></div>
<svg class="a" style="left:572px;top:259px" width="7" height="7" viewBox="0 0 7 7" shape-rendering="crispEdges"><path d="M0,2v3M1,3v3M2,4v3M3,3v3M4,2v3M5,1v3M6,0v3" stroke="#000"/></svg><svg class="a" style="left:572px;top:274px" width="7" height="7" viewBox="0 0 7 7" shape-rendering="crispEdges"><path d="M0,2v3M1,3v3M2,4v3M3,3v3M4,2v3M5,1v3M6,0v3" stroke="#000"/></svg><svg class="a" style="left:572px;top:289px" width="7" height="7" viewBox="0 0 7 7" shape-rendering="crispEdges"><path d="M0,2v3M1,3v3M2,4v3M3,3v3M4,2v3M5,1v3M6,0v3" stroke="#000"/></svg><svg class="a" style="left:572px;top:303px" width="7" height="7" viewBox="0 0 7 7" shape-rendering="crispEdges"><path d="M0,2v3M1,3v3M2,4v3M3,3v3M4,2v3M5,1v3M6,0v3" stroke="#000"/></svg><svg class="a" style="left:572px;top:318px" width="7" height="7" viewBox="0 0 7 7" shape-rendering="crispEdges"><path d="M0,2v3M1,3v3M2,4v3M3,3v3M4,2v3M5,1v3M6,0v3" stroke="#000"/></svg>
<span class="t" style="top:4.5px;color:#fff;left:3.3px;transform-origin:0 50%;transform:scaleX(0.980);--w:151.4;">CD Speed : Disc Quality Test</span>
<span class="t" style="top:4.5px;color:#fff;left:158.8px;transform-origin:0 50%;transform:scaleX(1.975);--w:7.9;">-</span>
<span class="t" style="top:4.5px;color:#fff;left:170.8px;transform-origin:0 50%;transform:scaleX(0.879);--w:29.9;">BENQ</span>
<span class="t" style="top:4.5px;color:#fff;left:216.8px;transform-origin:0 50%;transform:scaleX(0.931);--w:89.4;">DVD DD DW1640</span>
<span class="t" style="top:4.5px;color:#fff;left:321.8px;transform-origin:0 50%;transform:scaleX(0.925);--w:28.4;">BSLB</span>
<span class="t" style="top:31.8px;color:#000;left:21.8px;transform-origin:0 50%;transform:scaleX(0.973);--w:62.3;">Disc Quality</span>
<span class="t" style="top:51.0px;color:#000;left:265.3px;transform-origin:0 50%;transform:scaleX(0.950);--w:103.9;">recorded with SONY</span>
<span class="t" style="top:51.0px;color:#000;left:385.8px;transform-origin:0 50%;transform:scaleX(0.946);--w:103.9;">DVD RW DRU-800A</span>
<span class="t" style="top:51.0px;color:#000;left:498.3px;transform-origin:0 50%;transform:scaleX(0.902);--w:31.9;">vKY05</span>
<span class="t" style="top:59.9px;color:#000;right:688.5px;transform-origin:100% 50%;transform:scaleX(0.909);--w:18.2;">500</span>
<span class="t" style="top:86.1px;color:#000;right:688.5px;transform-origin:100% 50%;transform:scaleX(0.909);--w:18.2;">400</span>
<span class="t" style="top:112.3px;color:#000;right:688.5px;transform-origin:100% 50%;transform:scaleX(0.909);--w:18.2;">300</span>
<span class="t" style="top:138.5px;color:#000;right:688.5px;transform-origin:100% 50%;transform:scaleX(0.909);--w:18.2;">200</span>
<span class="t" style="top:164.7px;color:#000;right:688.5px;transform-origin:100% 50%;transform:scaleX(0.909);--w:18.2;">100</span>
<span class="t" style="top:67.4px;color:#000;left:532.7px;transform-origin:0 50%;transform:scaleX(0.928);--w:12.4;">16</span>
<span class="t" style="top:82.4px;color:#000;left:532.7px;transform-origin:0 50%;transform:scaleX(0.928);--w:12.4;">14</span>
<span class="t" style="top:98.4px;color:#000;left:532.7px;transform-origin:0 50%;transform:scaleX(0.928);--w:12.4;">12</span>
<span class="t" style="top:113.4px;color:#000;left:532.7px;transform-origin:0 50%;transform:scaleX(0.928);--w:12.4;">10</span>
<span class="t" style="top:128.4px;color:#000;left:532.7px;transform-origin:0 50%;transform:scaleX(0.957);--w:6.4;">8</span>
<span class="t" style="top:144.4px;color:#000;left:532.7px;transform-origin:0 50%;transform:scaleX(0.957);--w:6.4;">6</span>
<span class="t" style="top:159.4px;color:#000;left:532.7px;transform-origin:0 50%;transform:scaleX(0.957);--w:6.4;">4</span>
<span class="t" style="top:175.4px;color:#000;left:532.7px;transform-origin:0 50%;transform:scaleX(0.957);--w:6.4;">2</span>
<span class="t" style="top:199.5px;color:#000;left:56.0px;transform-origin:0 50%;transform:scaleX(0.863);--w:14.4;">0.0</span>
<span class="t" style="top:349.5px;color:#000;left:56.0px;transform-origin:0 50%;transform:scaleX(0.863);--w:14.4;">0.0</span>
<span class="t" style="top:199.5px;color:#000;left:108.0px;transform-origin:0 50%;transform:scaleX(0.863);--w:14.4;">0.5</span>
<span class="t" style="top:349.5px;color:#000;left:108.0px;transform-origin:0 50%;transform:scaleX(0.863);--w:14.4;">0.5</span>
<span class="t" style="top:199.5px;color:#000;left:159.9px;transform-origin:0 50%;transform:scaleX(0.863);--w:14.4;">1.0</span>
<span class="t" style="top:349.5px;color:#000;left:159.9px;transform-origin:0 50%;transform:scaleX(0.863);--w:14.4;">1.0</span>
<span class="t" style="top:199.5px;color:#000;left:211.9px;transform-origin:0 50%;transform:scaleX(0.863);--w:14.4;">1.5</span>
<span class="t" style="top:349.5px;color:#000;left:211.9px;transform-origin:0 50%;transform:scaleX(0.863);--w:14.4;">1.5</span>
<span class="t" style="top:199.5px;color:#000;left:263.8px;transform-origin:0 50%;transform:scaleX(0.863);--w:14.4;">2.0</span>
<span class="t" style="top:349.5px;color:#000;left:263.8px;transform-origin:0 50%;transform:scaleX(0.863);--w:14.4;">2.0</span>
<span class="t" style="top:199.5px;color:#000;left:315.8px;transform-origin:0 50%;transform:scaleX(0.863);--w:14.4;">2.5</span>
<span class="t" style="top:349.5px;color:#000;left:315.8px;transform-origin:0 50%;transform:scaleX(0.863);--w:14.4;">2.5</span>
<span class="t" style="top:199.5px;color:#000;left:367.7px;transform-origin:0 50%;transform:scaleX(0.863);--w:14.4;">3.0</span>
<span class="t" style="top:349.5px;color:#000;left:367.7px;transform-origin:0 50%;transform:scaleX(0.863);--w:14.4;">3.0</span>
<span class="t" style="top:199.5px;color:#000;left:419.7px;transform-origin:0 50%;transform:scaleX(0.863);--w:14.4;">3.5</span>
<span class="t" style="top:349.5px;color:#000;left:419.7px;transform-origin:0 50%;transform:scaleX(0.863);--w:14.4;">3.5</span>
<span class="t" style="top:199.5px;color:#000;left:471.6px;transform-origin:0 50%;transform:scaleX(0.863);--w:14.4;">4.0</span>
<span class="t" style="top:349.5px;color:#000;left:471.6px;transform-origin:0 50%;transform:scaleX(0.863);--w:14.4;">4.0</span>
<span class="t" style="top:199.5px;color:#000;left:523.5px;transform-origin:0 50%;transform:scaleX(0.863);--w:14.4;">4.5</span>
<span class="t" style="top:349.5px;color:#000;left:523.5px;transform-origin:0 50%;transform:scaleX(0.863);--w:14.4;">4.5</span>
<span class="t" style="top:209.8px;color:#000;right:688.5px;transform-origin:100% 50%;transform:scaleX(0.913);--w:12.2;">20</span>
<span class="t" style="top:209.7px;color:#000;left:531.8px;transform-origin:0 50%;transform:scaleX(0.928);--w:12.4;">20</span>
<span class="t" style="top:236.0px;color:#000;right:688.5px;transform-origin:100% 50%;transform:scaleX(0.913);--w:12.2;">16</span>
<span class="t" style="top:235.9px;color:#000;left:531.8px;transform-origin:0 50%;transform:scaleX(0.928);--w:12.4;">16</span>
<span class="t" style="top:262.2px;color:#000;right:688.5px;transform-origin:100% 50%;transform:scaleX(0.913);--w:12.2;">12</span>
<span class="t" style="top:262.1px;color:#000;left:531.8px;transform-origin:0 50%;transform:scaleX(0.928);--w:12.4;">12</span>
<span class="t" style="top:288.4px;color:#000;right:688.5px;transform-origin:100% 50%;transform:scaleX(0.927);--w:6.2;">8</span>
<span class="t" style="top:288.3px;color:#000;left:531.8px;transform-origin:0 50%;transform:scaleX(0.957);--w:6.4;">8</span>
<span class="t" style="top:314.6px;color:#000;right:688.5px;transform-origin:100% 50%;transform:scaleX(0.927);--w:6.2;">4</span>
<span class="t" style="top:314.5px;color:#000;left:531.8px;transform-origin:0 50%;transform:scaleX(0.957);--w:6.4;">4</span>
<span class="t" style="top:54.3px;color:#000;font-size:13px;left:582.8px;transform-origin:0 50%;transform:scaleX(0.958);--w:24.9;">開始</span>
<span class="t" style="top:54.6px;color:#000;font-size:13px;left:665.3px;transform-origin:0 50%;transform:scaleX(0.944);--w:40.9;">終了(X)</span>
<span class="t" style="top:75.5px;color:#000;font-size:13px;left:568.3px;transform-origin:0 50%;transform:scaleX(0.884);--w:60.9;">ディスク情報</span>
<span class="t" style="top:87.7px;color:#000;font-size:13px;left:568.3px;transform-origin:0 50%;transform:scaleX(0.803);--w:28.9;">タイプ:</span>
<span class="t" style="top:87.7px;color:#000099;left:616.3px;transform-origin:0 50%;transform:scaleX(1.037);--w:39.4;">DVD-R</span>
<span class="t" style="top:102.7px;color:#000;left:568.3px;transform-origin:0 50%;transform:scaleX(0.906);--w:13.9;">ID:</span>
<span class="t" style="top:102.7px;color:#000099;left:616.3px;transform-origin:0 50%;transform:scaleX(0.904);--w:43.4;">POSG06</span>
<span class="t" style="top:118.2px;color:#000;font-size:13px;left:568.3px;transform-origin:0 50%;transform:scaleX(0.908);--w:26.9;">日付:</span>
<span class="t" style="top:118.2px;color:#000099;left:616.3px;transform-origin:0 50%;transform:scaleX(0.954);--w:78.9;">8 October 2005</span>
<span class="t" style="top:133.2px;color:#000;left:568.3px;transform-origin:0 50%;transform:scaleX(0.960);--w:31.4;">Label:</span>
<span class="t" style="top:133.2px;color:#000099;left:616.3px;transform-origin:0 50%;transform:scaleX(0.865);--w:72.7;">CDS_TEST_B2</span>
<span class="t" style="top:149.3px;color:#000;left:568.3px;transform-origin:0 50%;transform:scaleX(0.989);--w:42.9;">Settings</span>
<span class="t" style="top:165.7px;color:#000;font-size:13px;left:568.3px;transform-origin:0 50%;transform:scaleX(0.940);--w:48.9;">転送速度</span>
<span class="t" style="top:166.7px;color:#000;left:633.8px;transform-origin:0 50%;transform:scaleX(1.100);--w:19.9;">4 X</span>
<span class="t" style="top:192.0px;color:#000;font-size:13px;left:568.3px;transform-origin:0 50%;transform:scaleX(0.958);--w:24.9;">開始</span>
<span class="t" style="top:190.0px;color:#000;left:632.8px;transform-origin:0 50%;transform:scaleX(0.956);--w:45.9;">0000 MB</span>
<span class="t" style="top:213.5px;color:#000;font-size:13px;left:568.3px;transform-origin:0 50%;transform:scaleX(0.940);--w:48.9;">終了位置</span>
<span class="t" style="top:213.0px;color:#000;left:632.8px;transform-origin:0 50%;transform:scaleX(0.956);--w:45.9;">4488 MB</span>
<span class="t" style="top:234.9px;color:#000;left:586.1px;transform-origin:0 50%;transform:scaleX(0.960);--w:58.9;">Quick Scan</span>
<span class="t" style="top:254.2px;color:#000;left:586.1px;transform-origin:0 50%;transform:scaleX(0.965);--w:68.9;">Show C1/PIE</span>
<span class="t" style="top:268.9px;color:#000;left:586.1px;transform-origin:0 50%;transform:scaleX(0.960);--w:67.9;">Show C2/PIF</span>
<span class="t" style="top:283.6px;color:#000;left:586.1px;transform-origin:0 50%;transform:scaleX(0.992);--w:58.9;">Show Jitter</span>
<span class="t" style="top:298.5px;color:#000;left:586.1px;transform-origin:0 50%;transform:scaleX(0.923);--w:92.4;">Show Read Speed</span>
<span class="t" style="top:313.5px;color:#000;left:586.1px;transform-origin:0 50%;transform:scaleX(0.934);--w:92.6;">Show Write Speed</span>
<span class="t" style="top:343.2px;color:#000;font-size:13px;left:568.3px;transform-origin:0 50%;transform:scaleX(0.831);--w:52.9;">品質スコア:</span>
<span class="t" style="top:343.8px;color:#000099;right:37.0px;transform-origin:100% 50%;transform:scaleX(0.898);--w:12.0;">91</span>
<span class="t" style="top:374.6px;color:#000;font-size:13px;left:568.3px;transform-origin:0 50%;transform:scaleX(0.933);--w:51.9;">進行状況:</span>
<span class="t" style="top:374.6px;color:#000099;right:34.5px;transform-origin:100% 50%;transform:scaleX(0.873);--w:29.7;">100 %</span>
<span class="t" style="top:393.8px;color:#000;font-size:13px;left:568.3px;transform-origin:0 50%;transform:scaleX(0.837);--w:49.4;">ポジション:</span>
<span class="t" style="top:393.8px;color:#000099;right:36.0px;transform-origin:100% 50%;transform:scaleX(0.941);--w:45.2;">4487 MB</span>
<span class="t" style="top:412.6px;color:#000;font-size:13px;left:568.3px;transform-origin:0 50%;transform:scaleX(0.908);--w:26.9;">速度:</span>
<span class="t" style="top:412.6px;color:#000099;right:34.5px;transform-origin:100% 50%;transform:scaleX(0.942);--w:32.7;">4.17 X</span>
<span class="t" style="top:361.9px;color:#000;left:40.3px;transform-origin:0 50%;transform:scaleX(0.931);--w:44.1;">PI Errors</span>
<span class="t" style="top:361.9px;color:#000;left:220.0px;transform-origin:0 50%;transform:scaleX(0.943);--w:54.1;">PI Failures</span>
<span class="t" style="top:361.9px;color:#000;left:401.3px;transform-origin:0 50%;transform:scaleX(1.015);--w:26.4;">Jitter</span>
<span class="t" style="top:375.8px;color:#000;font-size:13px;left:25.8px;transform-origin:0 50%;transform:scaleX(0.942);--w:27.9;">平均:</span>
<span class="t" style="top:375.8px;color:#000099;right:567.2px;transform-origin:100% 50%;transform:scaleX(0.876);--w:26.3;">35.17</span>
<span class="t" style="top:393.9px;color:#000;font-size:13px;left:25.8px;transform-origin:0 50%;transform:scaleX(0.942);--w:27.9;">最大:</span>
<span class="t" style="top:393.9px;color:#000099;right:567.2px;transform-origin:100% 50%;transform:scaleX(0.919);--w:18.4;">246</span>
<span class="t" style="top:411.6px;color:#000;font-size:13px;left:25.8px;transform-origin:0 50%;transform:scaleX(0.960);--w:31.9;">合計 :</span>
<span class="t" style="top:411.6px;color:#000099;right:567.2px;transform-origin:100% 50%;transform:scaleX(0.899);--w:36.0;">471854</span>
<span class="t" style="top:375.8px;color:#000;font-size:13px;left:208.0px;transform-origin:0 50%;transform:scaleX(0.942);--w:27.9;">平均:</span>
<span class="t" style="top:375.8px;color:#000099;right:385.0px;transform-origin:100% 50%;transform:scaleX(0.873);--w:20.4;">1.42</span>
<span class="t" style="top:393.9px;color:#000;font-size:13px;left:208.0px;transform-origin:0 50%;transform:scaleX(0.942);--w:27.9;">最大:</span>
<span class="t" style="top:393.9px;color:#000099;right:385.0px;transform-origin:100% 50%;transform:scaleX(0.898);--w:12.0;">15</span>
<span class="t" style="top:411.6px;color:#000;font-size:13px;left:208.0px;transform-origin:0 50%;transform:scaleX(0.960);--w:31.9;">合計 :</span>
<span class="t" style="top:411.6px;color:#000099;right:385.0px;transform-origin:100% 50%;transform:scaleX(0.902);--w:30.1;">10504</span>
<span class="t" style="top:375.8px;color:#000;font-size:13px;left:388.0px;transform-origin:0 50%;transform:scaleX(0.942);--w:27.9;">平均:</span>
<span class="t" style="top:375.8px;color:#000099;right:203.7px;transform-origin:100% 50%;transform:scaleX(0.874);--w:37.7;">11.47 %</span>
<span class="t" style="top:393.9px;color:#000;font-size:13px;left:388.0px;transform-origin:0 50%;transform:scaleX(0.942);--w:27.9;">最大:</span>
<span class="t" style="top:393.9px;color:#000099;right:203.7px;transform-origin:100% 50%;transform:scaleX(0.840);--w:31.4;">15.2 %</span>
<span class="t" style="top:417.0px;color:#000;left:389.0px;transform-origin:0 50%;transform:scaleX(0.928);--w:61.9;">PO Failures:</span>
<span class="t" style="top:417.0px;color:#000099;right:205.0px;transform-origin:100% 50%;--w:6.7;">0</span>
<script>
(function(){try{var a=document.querySelectorAll('.t');for(var i=0;i<a.length;i++){var e=a[i],w=parseFloat(e.style.getPropertyValue('--w'));if(!w)continue;var o=e.style.transform;e.style.transform='none';var n=e.getBoundingClientRect().width;if(!n){e.style.transform=o;continue;}var s=Math.max(0.75,Math.min(e.textContent.length>1?1.1:2,w/n));e.style.transform=Math.abs(s-1)>0.004?'scaleX('+s.toFixed(3)+')':'none';}}catch(x){}})();
</script>
</body></html>
